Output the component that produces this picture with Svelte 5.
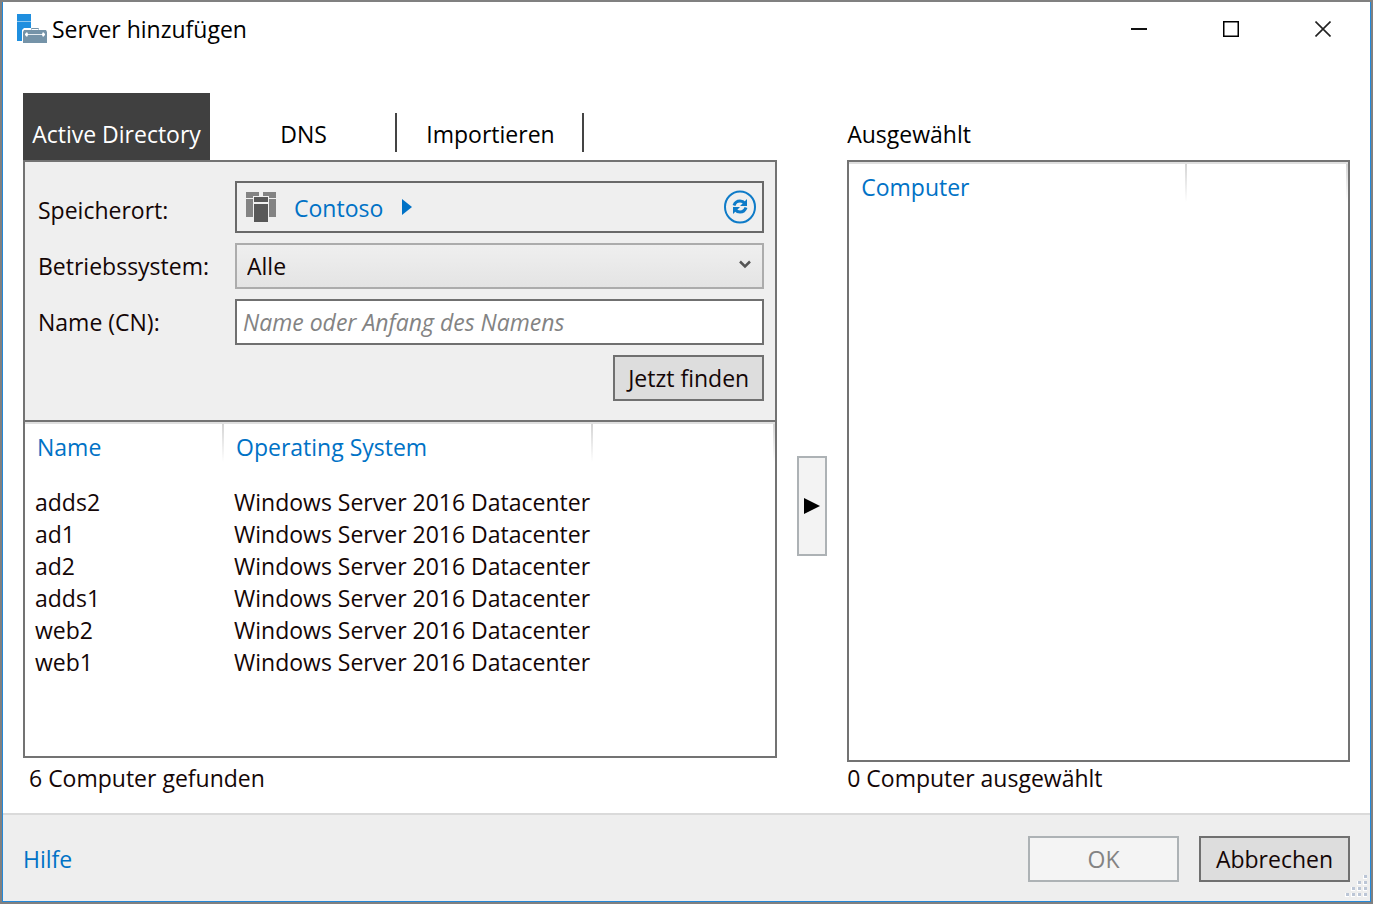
<script>
  const tabs = ['Active Directory', 'DNS', 'Importieren'];
  const servers = ['adds2', 'ad1', 'ad2', 'adds1', 'web2', 'web1'].map((name) => ({
    name,
    os: 'Windows Server 2016 Datacenter'
  }));
  let active = $state(0);
</script>

<div class="window">
  <header class="titlebar">
    <svg class="app-icon" width="32" height="30" viewBox="0 0 32 30" aria-hidden="true">
      <path fill="#1f8fdf" d="M1 0h14v27H1z" />
      <path fill="#8fc8f0" d="M1 7h14v1H1z" />
      <path fill="#fff" d="M6 16l2-2h7v-1h8v1h8v16H6z" />
      <path fill="none" stroke="#7593a8" stroke-width="1" d="M15.500 15.500v-1h7v1" />
      <path fill="#7593a8" d="M8 16h22l1 2v11H7V18z" />
      <path fill="#e4ebf0" d="M10 20h18v1H10z" />
      <path fill="#fff" d="M9 20l2-2 1 2v1l-1 2-2-2zM26 20l1-2 2 2v1l-2 2-1-2z" />
    </svg>
    <h1>Server hinzufügen</h1>
    <div class="window-buttons">
      <button aria-label="Minimieren">
        <svg width="16" height="16" viewBox="0 0 16 16"><path d="M0 7h16v2H0z" fill="#111" /></svg>
      </button>
      <button aria-label="Maximieren">
        <svg width="16" height="16" viewBox="0 0 16 16"><path d="M.750.750h14.500v14.500H.750z" fill="none" stroke="#000" stroke-width="1.500" /></svg>
      </button>
      <button aria-label="Schließen">
        <svg width="16" height="16" viewBox="0 0 16 16"><path d="M.5.500l15 15M15.500.500l-15 15" stroke="#222" stroke-width="1.600" /></svg>
      </button>
    </div>
  </header>

  <main>
    <section class="column">
      <div class="tabs" role="tablist">
        {#each tabs as tab, i}
          <button role="tab" class="tab" class:active={active === i} aria-selected={active === i} onclick={() => (active = i)}>{tab}</button>
        {/each}
      </div>
      <div class="box">
        <form class="filters" onsubmit={(e) => e.preventDefault()}>
          <span class="label">Speicherort:</span>
          <div class="location">
            <svg width="30" height="31" viewBox="0 0 30 31" aria-hidden="true">
              <path fill="#838383" d="M0 0h13v6H0zM17 0h13v6H17zM0 7h13v18H0zM17 7h13v18H17z" />
              <path fill="#f0f0f0" d="M7 4h16v27H7z" />
              <path fill="#585858" d="M8 5h14v5H8zM8 12h14v18H8z" />
            </svg>
            <a href="#contoso">Contoso</a>
            <svg width="10" height="16" viewBox="0 0 10 16" aria-hidden="true"><path d="M0 0l10 8-10 8z" fill="#0072c6" /></svg>
            <button type="button" class="refresh" aria-label="Aktualisieren">
              <svg width="32" height="34" viewBox="0 0 32 34">
                <ellipse cx="16" cy="17" rx="15" ry="15.500" fill="none" stroke="#0e7bc8" stroke-width="2" />
                <path d="M10 15.500q1.500-4.500 6-4.500 3 0 5 2.500M22 17.500q-1.500 4.500-6 4.500-3 0-5-2.500" fill="none" stroke="#0e7bc8" stroke-width="3" />
                <path fill="#0e7bc8" d="M23 9v7h-7zM9 24v-7h7z" />
              </svg>
            </button>
          </div>

          <label for="os">Betriebssystem:</label>
          <div class="select-wrap">
            <select id="os"><option>Alle</option></select>
            <svg class="chevron" width="12" height="10" viewBox="0 0 12 10" aria-hidden="true"><path d="M1 1.500l5 5 5-5" fill="none" stroke="#555" stroke-width="2.500" /></svg>
          </div>

          <label for="cn">Name (CN):</label>
          <input id="cn" type="text" placeholder="Name oder Anfang des Namens" />

          <button class="button find">Jetzt finden</button>
        </form>
        <table class="results">
          <colgroup><col class="col-name" /><col class="col-os" /><col /></colgroup>
          <thead><tr><th>Name</th><th>Operating System</th><th></th></tr></thead>
          <tbody>
            {#each servers as server}
              <tr><td>{server.name}</td><td>{server.os}</td><td></td></tr>
            {/each}
          </tbody>
        </table>
      </div>
      <p class="status found">6 Computer gefunden</p>
    </section>

    <button class="move" aria-label="Hinzufügen">
      <svg width="16" height="16" viewBox="0 0 16 16"><path d="M0 0l16 8-16 8z" fill="#000" /></svg>
    </button>

    <section class="column">
      <h2>Ausgewählt</h2>
      <div class="box">
        <table class="selected">
          <colgroup><col class="col-computer" /><col /></colgroup>
          <thead><tr><th>Computer</th><th></th></tr></thead>
        </table>
      </div>
      <p class="status">0 Computer ausgewählt</p>
    </section>
  </main>

  <footer>
    <a href="#hilfe">Hilfe</a>
    <div class="actions">
      <button class="button" disabled>OK</button>
      <button class="button">Abbrechen</button>
    </div>
    <svg class="grip" width="22" height="22" viewBox="0 0 22 22" aria-hidden="true">
      {#each [[18, 0], [12, 6], [18, 6], [6, 12], [12, 12], [18, 12], [0, 18], [6, 18], [12, 18], [18, 18]] as [x, y]}
        <rect {x} {y} width="4" height="4" fill="#fff" />
        <rect x={x + 1} {y} width="3" height="3" fill="#bcc6d6" />
      {/each}
    </svg>
  </footer>
</div>

<style>
  :global(body) {
    margin: 0;
  }
  .window {
    box-sizing: border-box;
    min-height: 100vh;
    display: flex;
    flex-direction: column;
    border: 2px solid #808080;
    box-shadow: inset 1px 0 #2488d8, inset -1px 0 #2488d8, inset 0 -1px #2488d8;
    padding: 0 1px 1px;
    background: #fff;
    color: #140606;
    font: 23px/32px "Open Sans", "Noto Sans", sans-serif;
  }
  .window * {
    box-sizing: border-box;
  }
  button,
  input,
  select {
    font: inherit;
    color: inherit;
    margin: 0;
    padding: 0;
    border-radius: 0;
  }
  button {
    border: 0;
    background: none;
  }
  svg {
    display: block;
    flex: none;
  }
  a {
    color: #0072c6;
    text-decoration: none;
  }
  h1,
  h2,
  p {
    margin: 0;
    font: inherit;
  }
  .titlebar {
    display: flex;
    align-items: center;
    height: 54px;
    padding: 0 1px 0 13px;
    gap: 4px;
    color: #000;
  }
  .window-buttons {
    display: flex;
    margin-left: auto;
  }
  .window-buttons button {
    display: grid;
    place-items: center;
    width: 92px;
    height: 54px;
  }
  main {
    flex: 1;
    display: grid;
    grid-template-columns: 3fr 30px 2fr;
    gap: 20px;
    padding: 37px 20px 19px;
  }
  .column {
    display: flex;
    flex-direction: column;
    min-width: 0;
  }
  .tabs {
    display: flex;
    height: 67px;
  }
  .tab {
    position: relative;
    min-width: 187px;
    padding-top: 14px;
    color: #000;
  }
  .tab.active {
    background: #404040;
    color: #fff;
  }
  .tab:not(.active)::after {
    content: "";
    position: absolute;
    right: 0;
    top: 20px;
    width: 2px;
    height: 39px;
    background: #444;
  }
  h2 {
    height: 67px;
    padding-top: 25px;
    color: #000;
  }
  .box {
    flex: 1;
    border: 2px solid #737373;
  }
  .filters {
    display: grid;
    grid-template-columns: 197px 1fr;
    gap: 10px 0;
    align-items: center;
    padding: 19px 11px 19px 13px;
    background: #efefef;
    border-bottom: 2px solid #737373;
  }
  .label {
    padding-top: 6px;
  }
  .location {
    display: flex;
    align-items: center;
    height: 52px;
    padding: 0 6px 0 9px;
    border: 2px solid #696969;
  }
  .location a {
    margin: 0 19px 0 18px;
    padding-top: 2px;
  }
  .refresh {
    margin-left: auto;
  }
  .select-wrap {
    position: relative;
  }
  select {
    display: block;
    appearance: none;
    width: 100%;
    height: 46px;
    padding-left: 10px;
    border: 2px solid #acacac;
    background: linear-gradient(#efefef, #e4e4e4);
  }
  .chevron {
    position: absolute;
    right: 13px;
    top: 17px;
    pointer-events: none;
  }
  input {
    width: 100%;
    height: 46px;
    padding: 0 6px;
    border: 2px solid #707070;
    background: #fff;
  }
  input::placeholder {
    color: #838383;
    font-style: italic;
    opacity: 1;
  }
  .button {
    height: 46px;
    min-width: 151px;
    border: 2px solid #707070;
    background: #ddd;
  }
  .button:disabled {
    border-color: #adb2b5;
    background: #f4f4f4;
    color: #838383;
  }
  .find {
    grid-column: 2;
    justify-self: end;
  }
  table {
    width: 100%;
    table-layout: fixed;
    border-collapse: collapse;
    box-shadow: inset 0 2px #dfdfdf;
  }
  .col-name {
    width: 199px;
  }
  .col-os {
    width: 369px;
  }
  .col-computer {
    width: 338px;
  }
  th {
    position: relative;
    padding: 9px 0 23px 12px;
    color: #0072c6;
    font-weight: 400;
    text-align: left;
    white-space: nowrap;
  }
  th::after {
    content: "";
    position: absolute;
    right: 0;
    top: 2px;
    width: 2px;
    height: 38px;
    background: linear-gradient(#d4d4d4, #fff);
  }
  td {
    height: 32px;
    padding: 0 0 0 10px;
    white-space: nowrap;
  }
  .move {
    align-self: center;
    display: grid;
    place-items: center;
    height: 100px;
    margin-top: 124px;
    border: 2px solid #adb2b5;
    background: #f3f3f3;
  }
  .found {
    padding: 4px 0 0 6px;
  }
  footer {
    position: relative;
    display: flex;
    align-items: center;
    justify-content: space-between;
    height: 88px;
    padding: 2px 20px 0;
    border-top: 2px solid #dadada;
    background: #eee;
  }
  .actions {
    display: flex;
    gap: 20px;
  }
  .grip {
    position: absolute;
    right: 3px;
    bottom: 4px;
  }
</style>
